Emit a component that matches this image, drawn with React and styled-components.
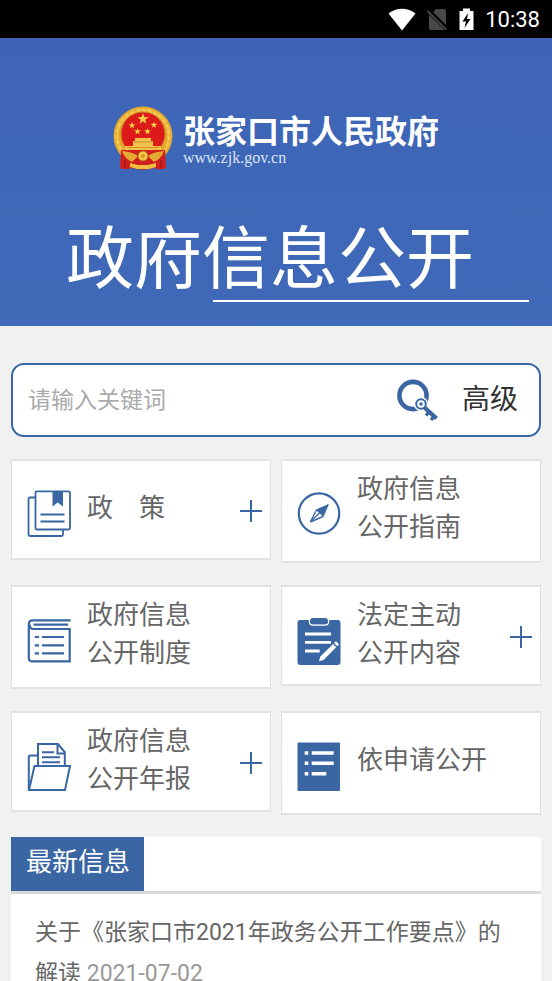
import { useState } from "react";
import styled, { createGlobalStyle } from "styled-components";

export default function App() {
    const [keyword, setKeyword] = useState("");

    function handleSubmit(event) {
        event.preventDefault();
    }

    return (
        <Screen>
            <GlobalStyle />
            <StatusBar>
                <WifiIcon />
                <NoSimIcon />
                <BatteryIcon />
                <Clock>10:38</Clock>
            </StatusBar>
            <Page>
                <Banner>
                    <Logo href="#home">
                        <Emblem />
                        <LogoText>
                            <SiteName>张家口市人民政府</SiteName>
                            <SiteUrl>www.zjk.gov.cn</SiteUrl>
                        </LogoText>
                    </Logo>
                    <BannerTitle>政府信息公开</BannerTitle>
                    <BannerRule />
                </Banner>
                <Content>
                    <SearchForm onSubmit={handleSubmit}>
                        <SearchInput
                            aria-label="请输入关键词"
                            placeholder="请输入关键词"
                            value={keyword}
                            onChange={(event) => setKeyword(event.target.value)}
                        />
                        <SearchButton type="submit" aria-label="搜索">
                            <SearchKeyIcon />
                        </SearchButton>
                        <AdvancedLink href="#advanced">高级</AdvancedLink>
                    </SearchForm>
                    <Menu>
                        {menuItems.map((item) => (
                            <MenuItem key={item.id} item={item} />
                        ))}
                    </Menu>
                    <News>
                        <NewsHeader>
                            <NewsTab>最新信息</NewsTab>
                        </NewsHeader>
                        <NewsList>
                            <li>
                                <NewsLink href="#news">关于《张家口市2021年政务公开工作要点》的解读</NewsLink>{" "}
                                <NewsDate dateTime="2021-07-02">2021-07-02</NewsDate>
                            </li>
                        </NewsList>
                    </News>
                </Content>
            </Page>
        </Screen>
    );
}

function MenuItem({ item }) {
    const { id, lines, Icon, expandable } = item;

    return (
        <Card $expandable={expandable}>
            <CardLink href={`#${id}`}>
                <IconBox>
                    <Icon />
                </IconBox>
                <CardLabel>
                    {lines.map((line) => (
                        <span key={line}>{line}</span>
                    ))}
                </CardLabel>
            </CardLink>
            {expandable && (
                <ExpandButton type="button" aria-label="展开">
                    <svg width="22" height="22" viewBox="0 0 22 22" stroke={blue} strokeWidth="2">
                        <path d="M0 11H22M11 0V22" />
                    </svg>
                </ExpandButton>
            )}
        </Card>
    );
}

function WifiIcon() {
    return (
        <svg width="28" height="23" viewBox="0 0 28 23">
            <path d="M14 22.5 0.5 5.5C8 -1 20 -1 27.5 5.5Z" fill="#fff" />
        </svg>
    );
}

function NoSimIcon() {
    return (
        <svg width="21" height="23" viewBox="0 0 21 23">
            <path d="M9 1H17Q19 1 19 3V17L6 4ZM2 6.5 17.5 22H4Q2 22 2 20Z" fill="#484848" />
            <path d="M0.5 3 19 21.5" stroke="#484848" strokeWidth="1.8" />
        </svg>
    );
}

function BatteryIcon() {
    return (
        <svg width="15" height="23" viewBox="0 0 15 23">
            <path d="M4 0.5H11V3H14.5V22H0.5V3H4Z" fill="#fff" />
            <path d="M9 5 3.5 13.5H7L5.5 20 11.5 11H8Z" fill="#000" />
        </svg>
    );
}

function Star({ x, y, r }) {
    const points = Array.from({ length: 10 }, (_, i) => {
        const radius = i % 2 ? r * 0.4 : r;
        const angle = (Math.PI / 5) * i - Math.PI / 2;
        return `${x + radius * Math.cos(angle)},${y + radius * Math.sin(angle)}`;
    });
    return <polygon points={points.join(" ")} fill="#f6cf45" />;
}

function Emblem() {
    return (
        <svg width="60" height="64" viewBox="0 0 60 64">
            <circle cx="30" cy="30" r="29.5" fill="#e3a92f" />
            <circle cx="30" cy="30" r="26" fill="none" stroke="#f3c650" strokeWidth="3" strokeDasharray="5 1" />
            <circle cx="30" cy="28" r="22" fill="#dc1a1a" stroke="#c9821f" />
            <path d="M8 44H52L53 62Q47 64.5 42 62L30 64 18 62Q13 64.5 7 62Z" fill="#cf201b" />
            <path d="M22 32H38V35H40V40H48V44H12V40H20V35H22Z" fill="#f2c24a" />
            <path d="M21 36H39M14 41.5H46" stroke="#c9821f" strokeWidth="0.8" />
            <path d="M9 45Q20 46 25 50L19 56Q12 53 9 45ZM51 45Q40 46 35 50L41 56Q48 53 51 45Z" fill="#e5aa33" />
            <circle cx="30" cy="50" r="5" fill="#f2c84f" stroke="#b8651a" />
            <circle cx="30" cy="50" r="2" fill="#d99522" />
            <path d="M17 57 25 59H35L43 57V61L36 63H24L17 61Z" fill="#efbd42" />
            <path d="M12 54V62M48 54V62" stroke="#9f1714" strokeWidth="1.2" />
            <Star x={30} y={13} r={5.8} />
            <Star x={19} y={19.5} r={3.5} />
            <Star x={24.5} y={25.5} r={3.5} />
            <Star x={34.5} y={25.5} r={3.5} />
            <Star x={41} y={19} r={3.5} />
        </svg>
    );
}

function SearchKeyIcon() {
    return (
        <svg width="43" height="43" viewBox="0 0 43 43">
            <circle cx="17" cy="16.5" r="13.6" fill="none" stroke={blue} strokeWidth="4.6" />
            <circle cx="25" cy="25" r="7.2" fill="#fff" />
            <circle cx="25" cy="25" r="4.8" fill="none" stroke={blue} strokeWidth="2" />
            <circle cx="25" cy="25" r="1.8" fill={blue} />
            <path d="M28.5 28.5 40.5 39.5" stroke={blue} strokeWidth="4.4" />
            <path d="M33 33 30 36.5M38 37.5 35 41" stroke={blue} strokeWidth="3.4" />
        </svg>
    );
}

function PolicyIcon() {
    return (
        <svg width="44" height="50" viewBox="0 0 44 50" fill="none" stroke={blue} strokeWidth="1.8">
            <path d="M8 7.5H3Q1.5 7.5 1.5 9V44.5Q1.5 46 3 46H34.5Q36 46 36 44.5V40" />
            <rect x="8.5" y="1.3" width="34.5" height="38.2" rx="1.5" />
            <path d="M25.5 1H36V16.5L30.7 12.5 25.5 16.5Z" fill={blue} stroke="none" />
            <path d="M13.5 24.5H37.5M13.5 31.5H37.5" />
        </svg>
    );
}

function GuideIcon() {
    return (
        <svg width="44" height="50" viewBox="0 0 44 50" fill="none" stroke={blue}>
            <circle cx="22" cy="23.5" r="20.2" strokeWidth="2.2" />
            <path d="M31 15 13.5 31.5 19.5 20Z" strokeWidth="1.3" />
            <path d="M19 20 32 14 26.5 27Z" fill={blue} stroke="none" />
            <path d="M13.2 32 26 26.5" strokeWidth="1.6" />
        </svg>
    );
}

function RulesIcon() {
    return (
        <svg width="44" height="50" viewBox="0 0 44 50" fill="none" stroke={blue} strokeWidth="2.2">
            <path d="M43.7 4.3H5.5Q1.8 4.3 1.8 8.5V42Q1.8 45.3 5 45.3H42.7V13H5.5Q2.5 12 2.5 8.5" />
            <path d="M41 8.7H6.5" />
            <path d="M7.7 21H12M15 21H37M7.7 29.3H12M15 29.3H37M7.7 37.3H12M15 37.3H37" />
        </svg>
    );
}

function ContentsIcon() {
    return (
        <svg width="44" height="50" viewBox="0 0 44 50" fill="none" stroke="#fff">
            <rect x="0.5" y="4" width="43" height="45" rx="3" fill={blue} stroke="none" />
            <path d="M12.5 3.5V5.5Q12.5 9 16 9H28Q31.5 9 31.5 5.5V3.5" strokeWidth="1.4" />
            <rect x="13.2" y="2" width="17.6" height="6.2" rx="2.5" fill={blue} stroke="none" />
            <path d="M8 18H34M8 26.3H34M8 35H22.7" strokeWidth="2.8" />
            <path d="M22 45.3 23.2 40.7 36 28 39.2 31.2 26.5 44Z" fill="#fff" stroke="none" />
            <path d="M37 27 39 25.2 42 28.2 40.2 30.2Z" fill="#fff" stroke="none" />
        </svg>
    );
}

function ReportIcon() {
    return (
        <svg width="44" height="50" viewBox="0 0 44 50" fill="none" stroke={blue} strokeWidth="2">
            <path d="M11 13.5H3.5Q1.8 13.5 1.8 15.2V48" />
            <path d="M11 24V2H31L37.8 10V24M30.5 2V11.5H38" />
            <path d="M7.5 24H43L38 48H2Z" />
            <path d="M15 10.3H27M15 15.3H33M15 20.3H33" />
        </svg>
    );
}

function RequestIcon() {
    return (
        <svg width="44" height="50" viewBox="0 0 44 50" fill="none" stroke="#fff" strokeWidth="3.6">
            <rect x="0.5" y="0.5" width="42.5" height="48.5" rx="1" fill={blue} stroke="none" />
            <path d="M7.7 11H11.3M14.7 11H36.7M7.7 21.3H11.3M14.7 21.3H36.7M7.7 31.7H11.3M14.7 31.7H29.3" />
        </svg>
    );
}

const blue = "#3a67a3";

const menuItems = [
    { id: "policy", lines: ["政　策"], Icon: PolicyIcon, expandable: true },
    { id: "guide", lines: ["政府信息", "公开指南"], Icon: GuideIcon },
    { id: "rules", lines: ["政府信息", "公开制度"], Icon: RulesIcon },
    { id: "contents", lines: ["法定主动", "公开内容"], Icon: ContentsIcon, expandable: true },
    { id: "report", lines: ["政府信息", "公开年报"], Icon: ReportIcon, expandable: true },
    { id: "request", lines: ["依申请公开"], Icon: RequestIcon },
];

const GlobalStyle = createGlobalStyle`
    * {
        box-sizing: border-box;
    }
    body {
        margin: 0;
        background: #f1f1f1;
        font-family: Roboto, "Noto Sans CJK SC", sans-serif;
    }
    a {
        color: inherit;
        text-decoration: none;
    }
    button {
        padding: 0;
        border: 0;
        background: none;
        cursor: pointer;
    }
    svg {
        display: block;
        flex-shrink: 0;
    }
`

const Screen = styled.div`
    display: flex;
    flex-direction: column;
    height: 100vh;
`

const StatusBar = styled.div`
    display: flex;
    flex-shrink: 0;
    justify-content: flex-end;
    align-items: center;
    gap: 11px;
    height: 38px;
    padding: 0 12px;
    background: #000;
`

const Clock = styled.time`
    padding-top: 2px;
    font-size: 22px;
    line-height: 36px;
    color: #fff;
`

const Page = styled.div`
    flex: 1;
    min-height: 0;
    overflow-y: auto;
    scrollbar-width: none;
`

const Banner = styled.header`
    display: flex;
    flex-direction: column;
    padding: 68px 23px 24px;
    background: linear-gradient(#3e64b6, #3f6ab8);
    color: #fff;
`

const Logo = styled.a`
    display: flex;
    justify-content: center;
    gap: 10px;
    height: 64px;
`

const LogoText = styled.div`
    display: flex;
    flex-direction: column;
    padding-top: 8px;
`

const SiteName = styled.span`
    font-size: 32px;
    font-weight: 700;
    line-height: 36px;
`

const SiteUrl = styled.span`
    font-family: "Liberation Serif", serif;
    font-size: 16px;
    line-height: 16px;
    color: #dbe4f5;
`

const BannerTitle = styled.h1`
    margin: 50px 12px 0 0;
    font-size: 68px;
    font-weight: 400;
    line-height: 80px;
    text-align: center;
    white-space: nowrap;
`

const BannerRule = styled.hr`
    width: 316px;
    height: 2px;
    margin: 0 0 0 auto;
    border: 0;
    background: #fff;
`

const Content = styled.main`
    padding: 37px 11px 0;
`

const SearchForm = styled.form`
    display: flex;
    align-items: center;
    height: 74px;
    padding: 0 21px 0 15px;
    border: 2px solid ${blue};
    border-radius: 13px;
    background: #fff;
`

const SearchInput = styled.input`
    flex: 1;
    min-width: 0;
    height: 60px;
    padding: 0;
    border: 0;
    outline: 0;
    background: none;
    font-family: inherit;
    font-size: 23px;
    color: #333;
    &::placeholder {
        color: #aaa;
        opacity: 1;
    }
`

const SearchButton = styled.button`
    margin-right: 23px;
`

const AdvancedLink = styled.a`
    font-size: 28px;
    line-height: 40px;
    color: #333;
`

const Menu = styled.nav`
    display: grid;
    grid-template-columns: 1fr 1fr;
    grid-auto-rows: 104px;
    align-items: start;
    gap: 22px 10px;
    margin: 22px 0;
`

const Card = styled.div`
    display: flex;
    align-items: center;
    height: ${(props) => (props.$expandable ? "101px" : "104px")};
    padding: 0 8px 0 15px;
    border: 1px solid #e2e2e2;
    border-width: 2px 1px;
    background: #fff;
`

const CardLink = styled.a`
    display: flex;
    flex: 1;
    align-self: flex-start;
    gap: 16px;
    padding-top: 9px;
`

const IconBox = styled.span`
    padding-top: 20px;
`

const CardLabel = styled.span`
    display: flex;
    flex-direction: column;
    justify-content: center;
    min-height: 76px;
    font-size: 26px;
    line-height: 38px;
    color: #666;
    white-space: nowrap;
`

const ExpandButton = styled.button`
    padding-top: 2px;
`

const News = styled.section`
    background: #fff;
`

const NewsHeader = styled.header`
    display: flex;
    border-bottom: 3px solid #d9d9d9;
`

const NewsTab = styled.h2`
    margin: 0;
    padding: 0 14px 4px 15px;
    background: ${blue};
    font-size: 26px;
    font-weight: 400;
    line-height: 50px;
    color: #fff;
`

const NewsList = styled.ul`
    margin: 0;
    padding: 18px 24px;
    list-style: none;
    font-size: 23px;
    line-height: 41px;
`

const NewsLink = styled.a`
    color: #666;
`

const NewsDate = styled.time`
    color: #999;
`
